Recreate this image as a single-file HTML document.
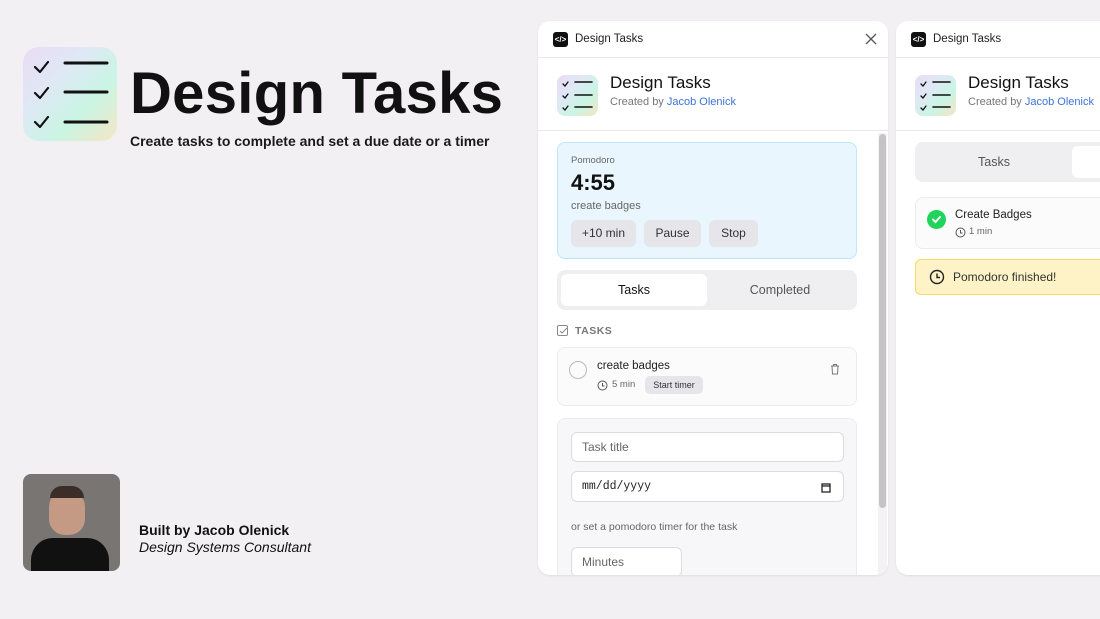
<!DOCTYPE html>
<html><head><meta charset="utf-8"><style>
*{box-sizing:border-box;margin:0;padding:0}
body{width:1100px;height:619px;overflow:hidden;background:#f2f0f3;font-family:"Liberation Sans",sans-serif;position:relative;color:#111}
.a{position:absolute}
.icon{background:linear-gradient(135deg,#eadcf5 0%,#dfe8f5 35%,#c9f5e4 65%,#f5e6c4 100%)}
.panel{background:#fff;border-radius:12px;overflow:hidden;box-shadow:0 1px 2px rgba(0,0,0,.08)}
.btn{background:#e6e5ea;border-radius:6px;font-size:12px;color:#333;text-align:center;line-height:27px}
.inp{background:#fff;border:1px solid #dcdce0;border-radius:6px;font-size:12px;color:#666;padding-left:10px}
</style></head><body>

<div class="a icon" style="left:23px;top:47px;width:94px;height:94px;border-radius:16px">
<svg width="94" height="94" viewBox="0 0 94 94" fill="none" stroke="#111" stroke-width="2.2" stroke-linecap="round" stroke-linejoin="round">
<path d="M12 20l5 5 8-10M12 46l5 5 8-10M12 75l5 5 8-10"/>
<path d="M42 16h42M42 45h42M42 75h42" stroke-width="3"/>
</svg></div>
<div class="a" style="left:130px;top:59px;font-size:58px;font-weight:bold;letter-spacing:0.3px;line-height:70px">Design Tasks</div>
<div class="a" style="left:130px;top:133px;font-size:14px;font-weight:bold;color:#1a1a1a">Create tasks to complete and set a due date or a timer</div>

<div class="a" style="left:23px;top:474px;width:97px;height:97px;border-radius:8px;background:#787573;overflow:hidden">
<div class="a" style="left:26px;top:15px;width:36px;height:46px;border-radius:18px 18px 16px 16px;background:#c49a84"></div>
<div class="a" style="left:27px;top:12px;width:34px;height:12px;border-radius:17px 17px 0 0;background:#3b2d27"></div>
<div class="a" style="left:8px;top:64px;width:78px;height:40px;border-radius:22px 22px 0 0;background:#111"></div>
</div>
<div class="a" style="left:139px;top:522px;font-size:14px;font-weight:bold">Built by Jacob Olenick</div>
<div class="a" style="left:139px;top:539px;font-size:14px;font-style:italic">Design Systems Consultant</div>

<div class="a panel" style="left:538px;top:21px;width:350px;height:554px">
 <div class="a" style="left:15px;top:11px;width:15px;height:15px;background:#111;border-radius:3px;color:#fff;font-size:8px;text-align:center;line-height:15px;font-weight:bold">&lt;/&gt;</div>
 <div class="a" style="left:37px;top:12px;font-size:11.5px;color:#222">Design Tasks</div>
 <svg class="a" style="left:327px;top:12px" width="12" height="12" stroke="#555" stroke-width="1.3"><path d="M1 1l10 10M11 1L1 11"/></svg>
 <div class="a" style="left:0;top:36px;width:350px;height:1px;background:#e8e8ea"></div>
 <div class="a icon" style="left:19px;top:54px;width:41px;height:41px;border-radius:8px">
  <svg width="41" height="41" fill="none" stroke="#111" stroke-width="1.3" stroke-linecap="round"><path d="M6 9l2 2 3-4M6 21l2 2 3-4M6 33l2 2 3-4"/><path d="M18 7h17M18 20h17M18 32h17" stroke-width="1.6"/></svg></div>
 <div class="a" style="left:72px;top:52px;font-size:17px;color:#111">Design Tasks</div>
 <div class="a" style="left:72px;top:75px;font-size:11px;color:#777">Created by <span style="color:#3b73d8">Jacob Olenick</span></div>
 <div class="a" style="left:0;top:109px;width:350px;height:1px;background:#e8e8ea"></div>
 <div class="a" style="left:340px;top:112px;width:9px;height:442px;background:#f3f3f4"></div>
 <div class="a" style="left:341px;top:113px;width:7px;height:374px;background:#c4c4c6;border-radius:4px"></div>

 <div class="a" style="left:19px;top:121px;width:300px;height:117px;background:#eaf6fe;border:1px solid #bde6fb;border-radius:8px">
  <div class="a" style="left:13px;top:12px;font-size:9.5px;color:#666">Pomodoro</div>
  <div class="a" style="left:13px;top:27px;font-size:22px;font-weight:bold;color:#111">4:55</div>
  <div class="a" style="left:13px;top:57px;font-size:11px;color:#666">create badges</div>
  <div class="a btn" style="left:13px;top:77px;width:65px">+10 min</div>
  <div class="a btn" style="left:86px;top:77px;width:57px">Pause</div>
  <div class="a btn" style="left:151px;top:77px;width:49px">Stop</div>
 </div>

 <div class="a" style="left:19px;top:249px;width:300px;height:40px;background:#efeff1;border-radius:8px">
  <div class="a" style="left:4px;top:4px;width:146px;height:32px;background:#fff;border-radius:6px;text-align:center;line-height:32px;font-size:12.5px;color:#111">Tasks</div>
  <div class="a" style="left:150px;top:4px;width:146px;height:32px;text-align:center;line-height:32px;font-size:12.5px;color:#555">Completed</div>
 </div>
 <svg class="a" style="left:19px;top:304px" width="12" height="12" fill="none" stroke="#888" stroke-width="1"><rect x="0.5" y="0.5" width="10" height="10" rx="1.5"/><path d="M3 6l2 2 5-5"/></svg>
 <div class="a" style="left:37px;top:304px;font-size:10.5px;font-weight:bold;color:#777;letter-spacing:.5px">TASKS</div>

 <div class="a" style="left:19px;top:326px;width:300px;height:59px;background:#fbfbfc;border:1px solid #ececee;border-radius:8px">
  <div class="a" style="left:11px;top:13px;width:18px;height:18px;border:1.5px solid #bbb;border-radius:50%"></div>
  <div class="a" style="left:39px;top:12px;font-size:11.5px;color:#222">create badges</div>
  <svg class="a" style="left:39px;top:32px" width="11" height="11" fill="none" stroke="#555" stroke-width="1"><circle cx="5.5" cy="5.5" r="4.5"/><path d="M5.5 3v3h2"/></svg>
  <div class="a" style="left:54px;top:31px;font-size:9.5px;color:#666">5 min</div>
  <div class="a" style="left:87px;top:28px;width:58px;height:18px;background:#e6e5ea;border-radius:5px;font-size:9px;color:#333;text-align:center;line-height:18px">Start timer</div>
  <svg class="a" style="left:272px;top:15px" width="10" height="12" fill="none" stroke="#777" stroke-width="1"><path d="M1 3h8M3.5 3V1.5h3V3M2 3l.5 8h5L8 3"/></svg>
 </div>

 <div class="a" style="left:19px;top:397px;width:300px;height:170px;background:#f7f7f9;border:1px solid #ececee;border-radius:8px">
  <div class="a inp" style="left:13px;top:13px;width:273px;height:30px;line-height:28px">Task title</div>
  <div class="a inp" style="left:13px;top:52px;width:273px;height:31px;line-height:29px;font-family:'Liberation Mono',monospace;font-size:11.5px;color:#222">mm/dd/yyyy
   <svg class="a" style="left:249px;top:10px" width="10" height="11" fill="none" stroke="#222" stroke-width="1.3"><rect x="1" y="2" width="8" height="8"/><path d="M1 4h8"/></svg></div>
  <div class="a" style="left:13px;top:102px;font-size:10.5px;color:#666">or set a pomodoro timer for the task</div>
  <div class="a inp" style="left:13px;top:128px;width:111px;height:30px;line-height:28px">Minutes</div>
 </div>
</div>

<div class="a panel" style="left:896px;top:21px;width:220px;height:554px">
 <div class="a" style="left:15px;top:11px;width:15px;height:15px;background:#111;border-radius:3px;color:#fff;font-size:8px;text-align:center;line-height:15px;font-weight:bold">&lt;/&gt;</div>
 <div class="a" style="left:37px;top:12px;font-size:11.5px;color:#222">Design Tasks</div>
 <div class="a" style="left:0;top:36px;width:220px;height:1px;background:#e8e8ea"></div>
 <div class="a icon" style="left:19px;top:54px;width:41px;height:41px;border-radius:8px">
  <svg width="41" height="41" fill="none" stroke="#111" stroke-width="1.3" stroke-linecap="round"><path d="M6 9l2 2 3-4M6 21l2 2 3-4M6 33l2 2 3-4"/><path d="M18 7h17M18 20h17M18 32h17" stroke-width="1.6"/></svg></div>
 <div class="a" style="left:72px;top:52px;font-size:17px;color:#111">Design Tasks</div>
 <div class="a" style="left:72px;top:75px;font-size:11px;color:#777;white-space:nowrap">Created by <span style="color:#3b73d8">Jacob Olenick</span></div>
 <div class="a" style="left:0;top:109px;width:220px;height:1px;background:#e8e8ea"></div>
 <div class="a" style="left:19px;top:121px;width:220px;height:40px;background:#efeff1;border-radius:8px">
  <div class="a" style="left:0;top:4px;width:158px;height:32px;text-align:center;line-height:32px;font-size:12.5px;color:#555">Tasks</div>
  <div class="a" style="left:157px;top:4px;width:100px;height:32px;background:#fff;border-radius:6px"></div>
 </div>
 <div class="a" style="left:19px;top:176px;width:220px;height:52px;background:#fbfbfc;border:1px solid #ececee;border-radius:8px">
  <div class="a" style="left:11px;top:12px;width:19px;height:19px;background:#1ed45a;border-radius:50%"><svg width="19" height="19" fill="none" stroke="#fff" stroke-width="2" stroke-linecap="round"><path d="M6 9.5l2.5 2.5 4.5-5"/></svg></div>
  <div class="a" style="left:39px;top:11px;font-size:11.5px;color:#222">Create Badges</div>
  <svg class="a" style="left:39px;top:29px" width="11" height="11" fill="none" stroke="#555" stroke-width="1"><circle cx="5.5" cy="5.5" r="4.5"/><path d="M5.5 3v3h2"/></svg>
  <div class="a" style="left:53px;top:28px;font-size:9.5px;color:#666">1 min</div>
 </div>
 <div class="a" style="left:19px;top:238px;width:220px;height:36px;background:#fef3c7;border:1px solid #f8d868;border-radius:6px">
  <svg class="a" style="left:13px;top:9px" width="16" height="16" fill="none" stroke="#222" stroke-width="1.4"><circle cx="8" cy="8" r="6.5"/><path d="M8 4.5V8.5h3"/></svg>
  <div class="a" style="left:37px;top:10px;font-size:12px;color:#333">Pomodoro finished!</div>
 </div>
</div>
</body></html>
